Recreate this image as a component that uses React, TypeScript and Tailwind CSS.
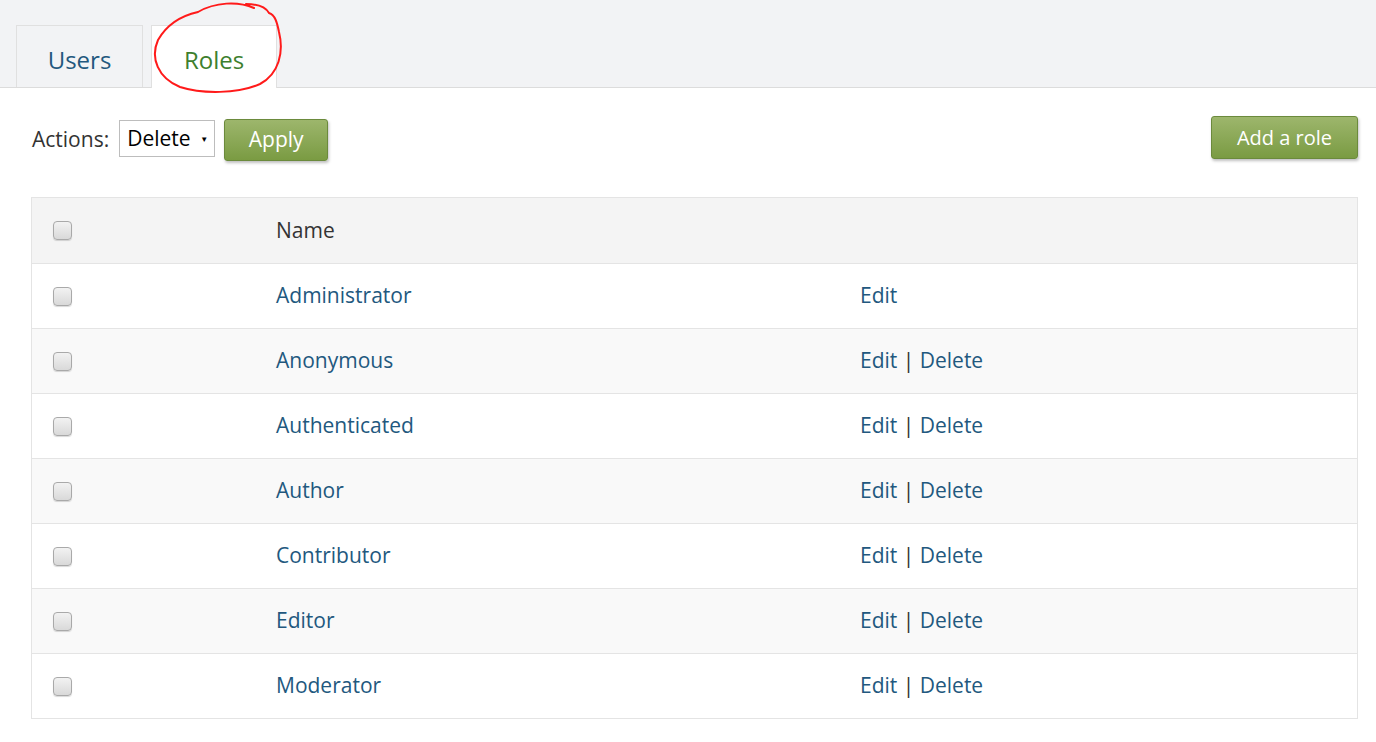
import React from 'react';

const roles = [
  { name: 'Administrator', canDelete: false },
  { name: 'Anonymous', canDelete: true },
  { name: 'Authenticated', canDelete: true },
  { name: 'Author', canDelete: true },
  { name: 'Contributor', canDelete: true },
  { name: 'Editor', canDelete: true },
  { name: 'Moderator', canDelete: true },
];

function Checkbox() {
  return (
    <span className="block w-[19px] h-[19px] rounded-[4px] border border-[#a9a9a9] bg-gradient-to-b from-[#f2f2f2] to-[#d9d9d9] shadow-[0_1px_1px_rgba(0,0,0,0.15)]" />
  );
}

function GreenButton({ children, className }: { children: React.ReactNode; className?: string }) {
  return (
    <button
      type="button"
      className={
        'rounded-[3px] border border-[#6b8a3c] bg-gradient-to-b from-[#9db66c] to-[#7a9b42] text-white text-[20px] shadow-[1px_2px_3px_rgba(0,0,0,0.25)] ' +
        (className ?? '')
      }
    >
      {children}
    </button>
  );
}

export default function App() {
  return (
    <div className="min-h-screen bg-white font-['Open_Sans','Noto_Sans',sans-serif] text-[#333] relative">
      {/* Tabs */}
      <div className="h-[88px] bg-[#f2f3f5] border-b border-[#dcdcdc] flex items-end pl-[16px] gap-[8px]">
        <div className="w-[127px] h-[62px] pt-[6px] border border-b-0 border-[#e0e0e0] bg-[#f2f3f5] flex items-center justify-center text-[24px] text-[#22587e]">
          Users
        </div>
        <div className="w-[126px] h-[63px] pt-[6px] -mb-px border border-b-0 border-[#e0e0e0] bg-white flex items-center justify-center text-[24px] text-[#3d7f2e]">
          Roles
        </div>
      </div>

      {/* Annotation */}
      <svg className="absolute left-0 top-0 pointer-events-none" width="300" height="100" viewBox="0 0 300 100">
        <path
          d="M254 8 C238 1 215 2 198 12 C180 16 166 26 158 40 C150 58 158 78 180 87 C202 94 238 94 260 84 C279 74 284 52 279 32 C277 22 275 15 269 13 C265 6 257 4 246 4"
          fill="none"
          stroke="#ff1a1a"
          strokeWidth="2"
          strokeLinecap="round"
        />
      </svg>

      {/* Actions */}
      <div className="flex items-start justify-between pl-[32px] pr-[18px] pt-[28px]">
        <div className="flex items-center h-[42px] mt-[3px]">
          <span className="text-[21px] text-[#333]">Actions:</span>
          <div className="ml-[10px] w-[96px] h-[37px] -mt-[3px] border border-[#bdbdbd] bg-white flex items-center pl-[7px] pr-[6px] text-[21px] text-black">
            <span className="flex-1">Delete</span>
            <span className="text-[8px]">▼</span>
          </div>
          <GreenButton className="ml-[9px] w-[104px] h-[42px] text-[21px]">Apply</GreenButton>
        </div>
        <GreenButton className="w-[147px] h-[43px]">Add a role</GreenButton>
      </div>

      {/* Table */}
      <div className="mt-[36px] ml-[31px] mr-[18px] border border-[#e4e4e4]">
        <div className="h-[65px] bg-[#f4f4f4] flex items-center">
          <div className="w-[244px] pl-[21px]">
            <Checkbox />
          </div>
          <div className="text-[21px] text-[#333]">Name</div>
        </div>
        {roles.map((r, i) => (
          <div
            key={r.name}
            className={
              'h-[65px] border-t border-[#e4e4e4] flex items-center ' + (i % 2 === 1 ? 'bg-[#f9f9f9]' : 'bg-white')
            }
          >
            <div className="w-[244px] pl-[21px]">
              <Checkbox />
            </div>
            <div className="w-[584px] text-[21px] text-[#22587e]">{r.name}</div>
            <div className="text-[21px] text-[#22587e]">
              Edit
              {r.canDelete && (
                <>
                  <span className="text-[#333]"> | </span>Delete
                </>
              )}
            </div>
          </div>
        ))}
      </div>
    </div>
  );
}
